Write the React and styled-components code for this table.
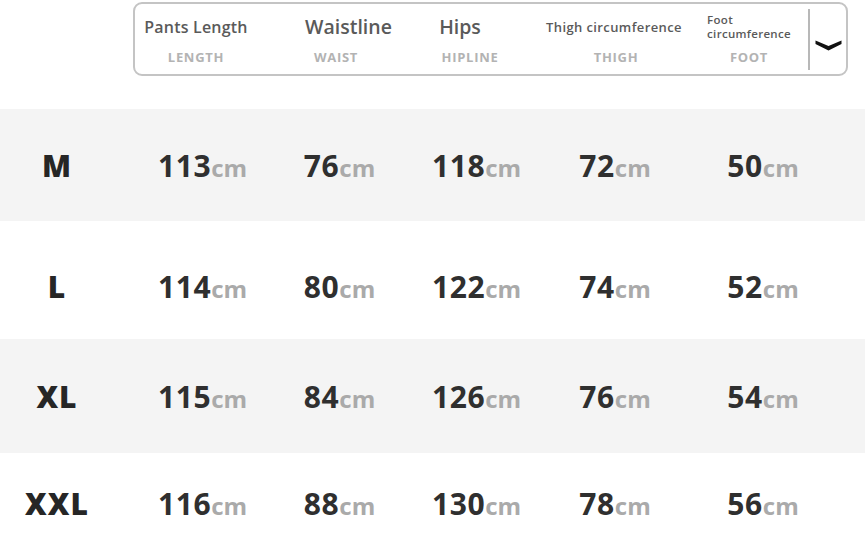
import React from 'react';
import styled, { createGlobalStyle } from 'styled-components';

const Global = createGlobalStyle`
  html, body { margin: 0; padding: 0; background: #fff; }
  body { font-family: "Open Sans", "Noto Sans", sans-serif; }
`;

const Page = styled.div`
  width: 865px;
  height: 536px;
  overflow: hidden;
  padding-top: 2px;
  box-sizing: border-box;
  background: #fff;
`;

const HeaderBar = styled.div`
  margin-left: 133px;
  width: 715px;
  height: 74px;
  box-sizing: border-box;
  border: 2px solid #c4c4c4;
  border-radius: 9px;
  display: flex;
  align-items: stretch;
  padding-left: 1px;
`;

const HeaderCell = styled.div`
  width: ${(p) => p.$w}px;
  flex: none;
  display: flex;
  flex-direction: column;
  align-items: center;
`;

const TitleArea = styled.div`
  height: 46px;
  display: flex;
  align-items: center;
  justify-content: center;
  white-space: nowrap;
`;

const Title = styled.div`
  font-size: ${(p) => p.$size}px;
  line-height: ${(p) => p.$lh || 20}px;
  font-weight: 600;
  color: #5a5a5a;
  letter-spacing: ${(p) => p.$ls || 0}px;
  text-align: left;
  margin-left: ${(p) => p.$dx || 0}px;
`;

const Sub = styled.div`
  font-size: 13px;
  line-height: 14px;
  font-weight: 700;
  color: #b3b3b3;
  letter-spacing: 0.7px;
  white-space: nowrap;
  margin-left: ${(p) => p.$dx || 0}px;
`;

const Divider = styled.div`
  margin: 5px 0 4px auto;
  width: 2px;
  flex: none;
  background: #b8b8b8;
`;

const ChevronBox = styled.div`
  width: 36px;
  flex: none;
  display: flex;
  align-items: center;
  justify-content: center;
  padding-top: 11px;
  box-sizing: border-box;
`;

const Table = styled.div`
  margin-top: 33px;
`;

const Row = styled.div`
  display: grid;
  grid-template-columns: 134px 137px 137px 137px 140px 156px;
  align-items: center;
  height: ${(p) => p.$h}px;
  box-sizing: border-box;
  padding-top: ${(p) => p.$pt || 0}px;
  background: ${(p) => (p.$shade ? '#f4f4f4' : '#fff')};
`;

const SizeCell = styled.div`
  padding-right: 20px;
  text-align: center;
  font-size: 30px;
  font-weight: 800;
  color: #262626;
  letter-spacing: 1px;
`;

const ValueCell = styled.div`
  text-align: center;
  white-space: nowrap;
`;

const Num = styled.span`
  font-size: 30px;
  font-weight: 700;
  color: #2f2f2f;
  letter-spacing: 0.6px;
`;

const Unit = styled.span`
  font-size: 24px;
  font-weight: 700;
  color: #aaaaaa;
`;

const headers = [
  { w: 120, title: ['Pants Length'], size: 16, ls: 0.2, sub: 'LENGTH' },
  { w: 172, title: ['Waistline'], size: 19.5, sub: 'WAIST', dx: 13, sdx: -12 },
  { w: 74, title: ['Hips'], size: 19.5, sub: 'HIPLINE', dx: -10, sdx: 10 },
  { w: 224, title: ['Thigh circumference'], size: 13, ls: 0.4, sub: 'THIGH', sdx: 4 },
  { w: 46, title: ['Foot', 'circumference'], size: 11.5, lh: 14, ls: 0.3, sub: 'FOOT' },
];

const rows = [
  { size: 'M', vals: [113, 76, 118, 72, 50], h: 112, shade: true },
  { size: 'L', vals: [114, 80, 122, 74, 52], h: 118, pt: 12 },
  { size: 'XL', vals: [115, 84, 126, 76, 54], h: 114, shade: true },
  { size: 'XXL', vals: [116, 88, 130, 78, 56], h: 100 },
];

export default function App() {
  return (
    <Page>
      <Global />
      <HeaderBar>
        {headers.map((h) => (
          <HeaderCell key={h.sub} $w={h.w}>
            <TitleArea>
              <Title $size={h.size} $lh={h.lh} $ls={h.ls} $dx={h.dx}>
                {h.title.map((t, i) => (
                  <div key={i}>{t}</div>
                ))}
              </Title>
            </TitleArea>
            <Sub $dx={h.sdx}>{h.sub}</Sub>
          </HeaderCell>
        ))}
        <Divider />
        <ChevronBox>
          <svg width="27" height="12" viewBox="0 0 27 12">
            <path d="M0.5 1.5 L13.5 7 L26.5 1.5 L26.5 5 L13.5 11.5 L0.5 5 Z" fill="#111" />
          </svg>
        </ChevronBox>
      </HeaderBar>
      <Table>
        {rows.map((r) => (
          <Row key={r.size} $h={r.h} $pt={r.pt} $shade={r.shade}>
            <SizeCell>{r.size}</SizeCell>
            {r.vals.map((v, i) => (
              <ValueCell key={i}>
                <Num>{v}</Num>
                <Unit>cm</Unit>
              </ValueCell>
            ))}
          </Row>
        ))}
      </Table>
    </Page>
  );
}
